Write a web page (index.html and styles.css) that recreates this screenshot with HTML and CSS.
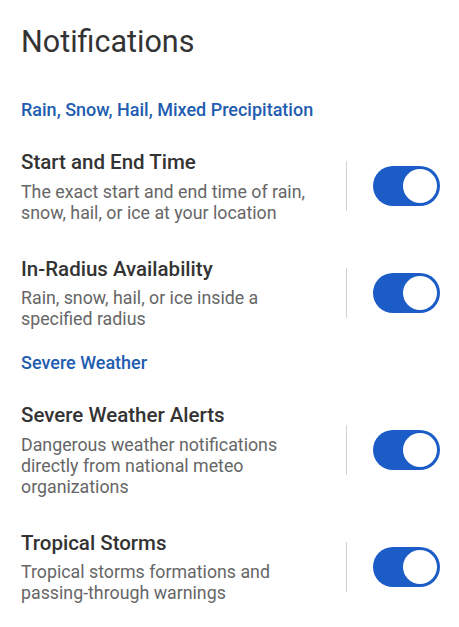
FILE: index.html
```html
<!DOCTYPE html>
<html lang="en">
<head>
<meta charset="utf-8">
<title>Notifications</title>
<link rel="stylesheet" href="styles.css">
</head>
<body>
<main class="page">
  <h1 class="page-title">Notifications</h1>

  <section class="section">
    <h2 class="section-title">Rain, Snow, Hail, Mixed Precipitation</h2>
    <div class="list">
      <div class="row">
        <div class="row-text">
          <div class="row-title">Start and End Time</div>
          <div class="row-desc">The exact start and end time of rain, snow, hail, or ice at your location</div>
        </div>
        <span class="divider"></span>
        <span class="toggle"><span class="knob"></span></span>
      </div>
      <div class="row">
        <div class="row-text">
          <div class="row-title">In-Radius Availability</div>
          <div class="row-desc">Rain, snow, hail, or ice inside a specified radius</div>
        </div>
        <span class="divider"></span>
        <span class="toggle"><span class="knob"></span></span>
      </div>
    </div>
  </section>

  <section class="section">
    <h2 class="section-title">Severe Weather</h2>
    <div class="list">
      <div class="row">
        <div class="row-text">
          <div class="row-title">Severe Weather Alerts</div>
          <div class="row-desc">Dangerous weather notifications directly from national meteo organizations</div>
        </div>
        <span class="divider"></span>
        <span class="toggle"><span class="knob"></span></span>
      </div>
      <div class="row">
        <div class="row-text">
          <div class="row-title">Tropical Storms</div>
          <div class="row-desc">Tropical storms formations and passing&#8209;through warnings</div>
        </div>
        <span class="divider"></span>
        <span class="toggle"><span class="knob"></span></span>
      </div>
    </div>
  </section>
</main>
</body>
</html>
```
FILE: styles.css
```css
* { box-sizing: border-box; }
html, body { margin: 0; padding: 0; background: #fff; }
body { font-family: Roboto, "Noto Sans", sans-serif; }

.page {
  padding: 24px 19px 0 21px;
  display: flex;
  flex-direction: column;
  gap: 24px;
}

.page-title {
  margin: 0 0 16px;
  font-size: 30.5px;
  line-height: 36px;
  font-weight: 400;
  color: #333;
}

.section { display: flex; flex-direction: column; }

.section-title {
  margin: 0 0 30px;
  font-size: 18px;
  line-height: 20px;
  font-weight: 500;
  color: #1f5db0;
}

.list { display: flex; flex-direction: column; gap: 34px; }

.row { display: flex; align-items: center; }

.row-text { flex: 1; min-width: 0; padding-right: 22px; }

.row-title {
  font-size: 20.5px;
  line-height: 24px;
  font-weight: 500;
  color: #333;
}

.row-desc {
  margin-top: 6.5px;
  font-size: 17.8px;
  line-height: 21px;
  color: #666;
}

.divider {
  width: 1px;
  height: 50px;
  background: #cfcfd4;
  flex-shrink: 0;
}

.toggle {
  margin-left: 26px;
  width: 67px;
  height: 40px;
  border-radius: 20px;
  background: #1b5cc7;
  display: flex;
  align-items: center;
  justify-content: flex-end;
  padding: 3px;
  flex-shrink: 0;
}

.knob {
  width: 34px;
  height: 34px;
  border-radius: 50%;
  background: #fff;
}
```
